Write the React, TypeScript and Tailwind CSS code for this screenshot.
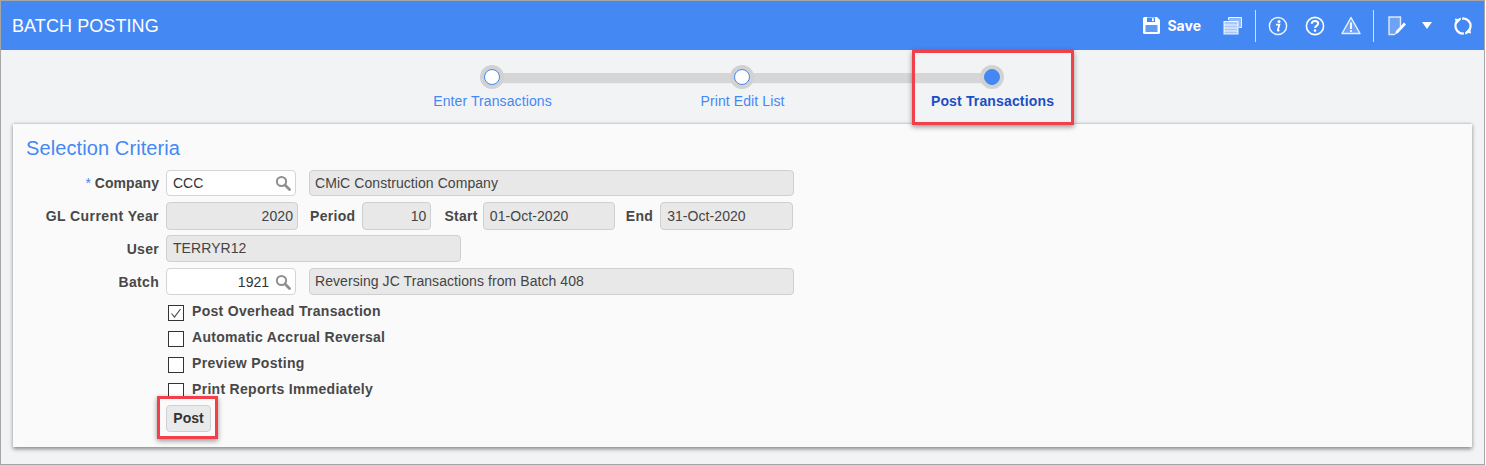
import React from 'react';

const FONT = "font-['Liberation_Sans',Arial,sans-serif]";

function SaveIcon() {
  return (
    <svg width="19" height="19" viewBox="0 0 19 19" fill="none">
      <path d="M1 2.5C1 1.7 1.7 1 2.5 1H15l3 3v12.5c0 .8-.7 1.5-1.5 1.5h-14C1.7 18 1 17.3 1 16.5z" fill="#fff" />
      <rect x="3.5" y="9" width="12" height="7" fill="#5f9af6" />
      <rect x="5" y="1.5" width="8" height="4.5" fill="#4488f4" />
      <rect x="10" y="2.2" width="1.8" height="3" fill="#fff" />
    </svg>
  );
}

function PrintIcon() {
  return (
    <svg width="19" height="19" viewBox="0 0 19 19" fill="none" stroke="#fff">
      <path d="M5.5 4V1.5h13v10h-2.5" strokeOpacity="0.9" fill="#8fb8f8" />
      <rect x="1" y="5.5" width="14" height="12.5" fill="#a9c8fa" strokeOpacity="0.9" />
      <path d="M1 9h14M1 12h14M1 15h14" strokeOpacity="0.8" />
    </svg>
  );
}

function InfoIcon() {
  return (
    <svg width="20" height="20" viewBox="0 0 20 20" fill="none">
      <circle cx="10" cy="10" r="8.6" stroke="#fff" strokeWidth="1.5" strokeOpacity="0.9" />
      <circle cx="11" cy="5.6" r="1.5" fill="#fff" />
      <path d="M8 8.6h3.4l-1.6 5.6c-.1.5.4.6 1.6 0" stroke="#fff" strokeWidth="1.8" fill="none" />
    </svg>
  );
}

function HelpIcon() {
  return (
    <svg width="20" height="20" viewBox="0 0 20 20" fill="none">
      <circle cx="10" cy="10" r="8.6" stroke="#fff" strokeWidth="1.6" />
      <path d="M6.8 7.8C6.8 5.9 8.2 5 10 5s3.2 1 3.2 2.6c0 2.2-3.2 2.3-3.2 4.4" stroke="#fff" strokeWidth="2" fill="none" />
      <circle cx="10" cy="14.6" r="1.3" fill="#fff" />
    </svg>
  );
}

function WarnIcon() {
  return (
    <svg width="20" height="19" viewBox="0 0 20 19" fill="none">
      <path d="M10 1.5 19 17.5H1z" stroke="#fff" strokeOpacity="0.85" strokeWidth="1.5" fill="#6da2f6" strokeLinejoin="round" />
      <path d="M10 6.5v6.5" stroke="#fff" strokeWidth="2" strokeOpacity="0.9" />
      <circle cx="10" cy="15" r="1.1" fill="#fff" />
    </svg>
  );
}

function NoteIcon() {
  return (
    <svg width="19" height="20" viewBox="0 0 19 20" fill="none">
      <path d="M12.5 10.5V1H1v17.5h6" stroke="#fff" strokeOpacity="0.8" strokeWidth="1.4" fill="#6da2f6" />
      <path d="M7 18.5 8 15 16 6.5l2 2L10 17z" fill="#fff" />
    </svg>
  );
}

function RefreshIcon() {
  return (
    <svg width="20" height="20" viewBox="0 0 20 20" fill="none">
      <circle cx="10" cy="10" r="7.6" stroke="#fff" strokeWidth="2.2" />
      <path d="M8.6 0.5 8.2 5M11.4 19.5l.4-4.5" stroke="#4488f4" strokeWidth="1.4" />
      <path d="M2 2.5 7.8 3.4 3 8.4z" fill="#fff" />
      <path d="M18 17.5 12.2 16.6 17 11.6z" fill="#fff" />
    </svg>
  );
}

function SearchIcon() {
  return (
    <svg width="16" height="16" viewBox="0 0 16 16" fill="none" className="shrink-0">
      <circle cx="6.5" cy="6.5" r="4.6" stroke="#8f8f8f" strokeWidth="2" />
      <path d="M10 10l4.5 4.5" stroke="#8f8f8f" strokeWidth="2.8" strokeLinecap="round" />
    </svg>
  );
}

function Step({ label, active }: { label: string; active?: boolean }) {
  return (
    <div className="relative flex w-[250px] flex-col items-center">
      <div className="flex h-6 w-6 items-center justify-center rounded-full bg-[#d2d2d2]">
        <div className={`h-4 w-4 rounded-full border border-[#4488f4] ${active ? 'bg-[#4488f4]' : 'bg-white'}`} />
      </div>
      <span className={`ml-[2px] mt-1 text-sm leading-4 ${active ? 'font-bold tracking-[0.15px] text-[#1b4fc4]' : 'tracking-[0.1px] text-[#4488f4]'}`}>{label}</span>
    </div>
  );
}

function Label({ children, className = 'tracking-[0.3px]' }: { children: React.ReactNode; className?: string }) {
  return <span className={`text-sm font-bold text-[#484848] ${className}`}>{children}</span>;
}

function ReadOnly({ value, className = '', right }: { value: string; className?: string; right?: boolean }) {
  return (
    <div className={`flex items-center rounded-[4px] border border-[#cfcfcf] bg-[#e8e8e8] pb-px text-sm tracking-[0.07px] text-[#444] ${right ? 'justify-end pr-1' : 'pl-[5px]'} ${className}`}>
      {value}
    </div>
  );
}

function LookupInput({ value, right }: { value: string; right?: boolean }) {
  return (
    <div className={`flex h-full w-[130px] items-center rounded-[4px] border border-[#d4d4d4] bg-white pl-[6px] pr-1 text-sm text-[#333] ${right ? 'justify-end gap-[6px]' : 'justify-between'}`}>
      {value}
      <SearchIcon />
    </div>
  );
}

function Check({ label, checked }: { label: string; checked?: boolean }) {
  return (
    <div className="flex h-[26px] items-center pl-[154px]">
      <div className="flex h-4 w-4 items-center justify-center border border-[#333] bg-white">
        {checked && (
          <svg width="12" height="12" viewBox="0 0 12 12" fill="none">
            <path d="M1.5 6.5 4.5 10 10.5 2" stroke="#444" strokeWidth="1.1" />
          </svg>
        )}
      </div>
      <Label className="ml-2 -mt-1 tracking-[0.3px]">{label}</Label>
    </div>
  );
}

export default function App() {
  return (
    <div className={`${FONT} relative h-[465px] w-[1485px] overflow-hidden border border-[#a6a6a6] bg-[#f2f3f5]`}>
      {/* Header */}
      <header className="flex h-[49px] items-center bg-[#4488f4] pl-[11px] text-white">
        <h1 className="text-lg tracking-[0.08px]">BATCH POSTING</h1>
        <div className="ml-auto flex items-center">
          <SaveIcon />
          <span className="ml-[6px] font-['Inter',sans-serif] text-sm font-bold">Save</span>
          <div className="ml-[22px]"><PrintIcon /></div>
          <div className="ml-[13px] h-[32px] w-px bg-[#cfe0fc]" />
          <div className="ml-[12px]"><InfoIcon /></div>
          <div className="ml-[17px]"><HelpIcon /></div>
          <div className="ml-[16px]"><WarnIcon /></div>
          <div className="ml-[12px] h-[32px] w-px bg-[#cfe0fc]" />
          <div className="ml-[14px]"><NoteIcon /></div>
          <div className="ml-[15px] h-0 w-0 border-x-[5px] border-t-[7px] border-x-transparent border-t-white" />
          <div className="ml-[21px] mr-[11px]"><RefreshIcon /></div>
        </div>
      </header>

      {/* Stepper */}
      <div className="relative flex h-[73px] justify-center pr-[2px] pt-[15px]">
        <div className="absolute left-[490px] top-[23px] h-[9px] w-[500px] bg-[#d6d6d6] shadow-[0_1px_1px_rgba(0,0,0,0.12)]" />
        <Step label="Enter Transactions" />
        <Step label="Print Edit List" />
        <Step label="Post Transactions" active />
      </div>

      {/* Panel */}
      <section className="mx-[12px] h-[324px] border border-t-[#cfcfcf] border-x-transparent border-b-transparent bg-[#fafafa] shadow-[0_2px_4px_rgba(0,0,0,0.45)]">
        <h2 className="pl-[12px] pt-[12px] text-xl leading-6 tracking-[0.1px] text-[#4488f4]">Selection Criteria</h2>
        <div className="mt-[10px] flex flex-col">
          <div className="flex h-[26px] items-center">
            <div className="w-[145px] text-right"><Label className="tracking-[0.05px]"><span className="font-normal text-[#4488f4]">*</span> Company</Label></div>
            <div className="ml-[7px] h-full"><LookupInput value="CCC" /></div>
            <ReadOnly value="CMiC Construction Company" className="ml-[13px] h-full w-[485px]" />
          </div>
          <div className="mt-[6px] flex h-[28px] items-center">
            <div className="w-[145px] text-right"><Label className="tracking-[0.43px]">GL Current Year</Label></div>
            <ReadOnly value="2020" right className="ml-[7px] h-full w-[132px]" />
            <Label className="ml-[12px] tracking-[0.3px]">Period</Label>
            <ReadOnly value="10" right className="ml-[7px] h-full w-[69px]" />
            <Label className="ml-[13px] tracking-[0.3px]">Start</Label>
            <ReadOnly value="01-Oct-2020" className="ml-[5px] h-full w-[132px] pl-[6px]" />
            <Label className="ml-[11px] tracking-[0.3px]">End</Label>
            <ReadOnly value="31-Oct-2020" className="ml-[7px] h-full w-[133px] pl-[6px]" />
          </div>
          <div className="mt-[5px] flex h-[27px] items-center">
            <div className="w-[145px] text-right"><Label>User</Label></div>
            <ReadOnly value="TERRYR12" className="ml-[7px] h-full w-[295px] pl-[6px]" />
          </div>
          <div className="mt-[6px] flex h-[27px] items-center">
            <div className="w-[145px] text-right"><Label>Batch</Label></div>
            <div className="ml-[7px] h-full"><LookupInput value="1921" right /></div>
            <ReadOnly value="Reversing JC Transactions from Batch 408" className="ml-[13px] h-full w-[485px]" />
          </div>
        </div>
        <div className="mt-[5px]">
          <Check label="Post Overhead Transaction" checked />
          <Check label="Automatic Accrual Reversal" />
          <Check label="Preview Posting" />
          <Check label="Print Reports Immediately" />
        </div>
        <button className="ml-[152px] mt-px h-[27px] w-[45px] rounded-[4px] border border-[#d0d0d0] bg-[#e9eaec] pb-[2px] text-sm font-bold text-[#333]">Post</button>
      </section>

      {/* Red callouts */}
      <div className="absolute left-[911px] top-[49px] h-[75px] w-[162px] border-[3px] border-[#f2404a] shadow-[0_2px_5px_rgba(0,0,0,0.4)]" />
      <div className="absolute left-[156px] top-[395px] h-[43px] w-[61px] border-[3px] border-[#f2404a] shadow-[0_2px_5px_rgba(0,0,0,0.4)]" />
    </div>
  );
}
